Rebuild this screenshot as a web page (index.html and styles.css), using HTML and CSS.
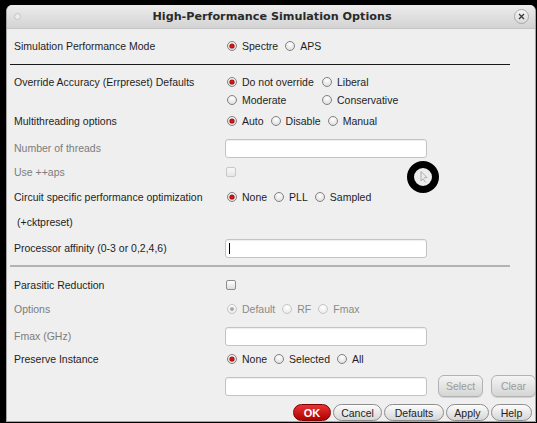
FILE: index.html
```html
<!DOCTYPE html>
<html>
<head>
<meta charset="utf-8">
<link rel="stylesheet" href="styles.css">
</head>
<body>
<div class="win">
  <div class="titlebar">
    <span class="dot"></span>
    <span class="title">High-Performance Simulation Options</span>
    <span class="close"><svg width="7" height="7" viewBox="0 0 7 7"><path d="M1 1L6 6M6 1L1 6" stroke="#3a3a3a" stroke-width="1.3"/></svg></span>
  </div>
  <div class="content">
    <div class="row">
      <span class="lbl">Simulation Performance Mode</span>
      <div class="ctl radios">
        <span class="opt"><span class="radio on"></span>Spectre</span>
        <span class="opt"><span class="radio"></span>APS</span>
      </div>
    </div>
    <div class="sep dark s1"></div>
    <div class="row tall m8">
      <span class="lbl top">Override Accuracy (Errpreset) Defaults</span>
      <div class="ctl grid2">
        <span class="opt"><span class="radio on"></span>Do not override</span>
        <span class="opt"><span class="radio"></span>Liberal</span>
        <span class="opt"><span class="radio"></span>Moderate</span>
        <span class="opt"><span class="radio"></span>Conservative</span>
      </div>
    </div>
    <div class="row m1">
      <span class="lbl">Multithreading options</span>
      <div class="ctl radios">
        <span class="opt"><span class="radio on"></span>Auto</span>
        <span class="opt"><span class="radio"></span>Disable</span>
        <span class="opt"><span class="radio"></span>Manual</span>
      </div>
    </div>
    <div class="row m5">
      <span class="lbl dim">Number of threads</span>
      <div class="ctl"><div class="field"></div></div>
    </div>
    <div class="row m2">
      <span class="lbl dim">Use ++aps</span>
      <div class="ctl"><span class="check off"></span></div>
    </div>
    <div class="row m3">
      <span class="lbl">Circuit specific performance optimization</span>
      <div class="ctl radios">
        <span class="opt"><span class="radio on"></span>None</span>
        <span class="opt"><span class="radio"></span>PLL</span>
        <span class="opt"><span class="radio"></span>Sampled</span>
      </div>
    </div>
    <div class="row m3">
      <span class="lbl indent">(+cktpreset)</span>
    </div>
    <div class="row m4">
      <span class="lbl">Processor affinity (0-3 or 0,2,4,6)</span>
      <div class="ctl"><div class="field"><span class="caret"></span></div></div>
    </div>
    <div class="sep grey s2"></div>
    <div class="row m7">
      <span class="lbl">Parasitic Reduction</span>
      <div class="ctl"><span class="check"></span></div>
    </div>
    <div class="row m2">
      <span class="lbl dim">Options</span>
      <div class="ctl radios disabled">
        <span class="opt"><span class="radio on"></span>Default</span>
        <span class="opt"><span class="radio"></span>RF</span>
        <span class="opt"><span class="radio"></span>Fmax</span>
      </div>
    </div>
    <div class="row m5">
      <span class="lbl dim">Fmax (GHz)</span>
      <div class="ctl"><div class="field"></div></div>
    </div>
    <div class="row m1">
      <span class="lbl">Preserve Instance</span>
      <div class="ctl radios">
        <span class="opt"><span class="radio on"></span>None</span>
        <span class="opt"><span class="radio"></span>Selected</span>
        <span class="opt"><span class="radio"></span>All</span>
      </div>
    </div>
    <div class="row m5">
      <span class="lbl"></span>
      <div class="ctl">
        <div class="field"></div>
        <span class="sbtn sel">Select</span>
        <span class="sbtn clr">Clear</span>
      </div>
    </div>
    <div class="btns">
      <span class="btn ok">OK</span>
      <span class="btn cancel">Cancel</span>
      <span class="btn defaults">Defaults</span>
      <span class="btn apply">Apply</span>
      <span class="btn help">Help</span>
    </div>
  </div>
</div>
<div class="busy">
  <svg width="34" height="34" viewBox="0 0 34 34">
    <circle cx="17" cy="17" r="12.5" fill="#ececec" stroke="#000" stroke-width="7"/>
    <path d="M15 11.5 L15 21 L17.2 18.8 L19.6 22.5 M15 11.5 L21 17.5 L18 17.8" fill="none" stroke="#a8a8a8" stroke-width="0.9"/>
  </svg>
</div>
</body>
</html>
```
FILE: styles.css
```css
html, body {
  margin: 0;
  padding: 0;
}
body {
  background: #000;
  width: 537px;
  height: 423px;
  overflow: hidden;
  position: relative;
  font-family: "Liberation Sans", Arial, sans-serif;
  font-size: 10.5px;
  color: #1e1e1e;
}
.win {
  margin: 5px 0 0 6px;
  width: 530px;
  height: 417px;
  box-sizing: border-box;
  background: #efefef;
  border: 1px solid #a4a4a4;
  border-top: none;
  border-radius: 6px 6px 0 0;
  overflow: hidden;
}
.titlebar {
  height: 24px;
  display: flex;
  align-items: center;
  background: linear-gradient(#ececec, #d3d3d3);
  border-bottom: 1px solid #c4c4c4;
  box-sizing: border-box;
}
.dot {
  width: 7px;
  height: 7px;
  margin-left: 7px;
  border-radius: 50%;
  box-sizing: border-box;
  border: 1px solid #c4c4c4;
  background: #ececec;
}
.title {
  flex: 1;
  text-align: center;
  font-family: "DejaVu Sans", sans-serif;
  font-weight: bold;
  font-size: 11.2px;
  color: #2a2a2a;
  padding-left: 9px;
}
.close {
  width: 15px;
  height: 15px;
  margin-right: 6px;
  border-radius: 50%;
  box-sizing: border-box;
  border: 1px solid #a9a9a9;
  background: linear-gradient(#f6f6f6, #dadada);
  display: flex;
  align-items: center;
  justify-content: center;
}
.content {
  padding: 6px 0 0 7px;
}
.row {
  display: grid;
  grid-template-columns: 211px 1fr;
  align-items: center;
  height: 22px;
}
.row.tall {
  height: 36px;
  align-items: start;
}
.lbl.top {
  line-height: 18px;
}
.lbl.dim {
  color: #7c7c7c;
}
.lbl.indent {
  padding-left: 3px;
}
.m1 { margin-top: 1px; }
.m2 { margin-top: 2px; }
.m3 { margin-top: 3px; }
.m4 { margin-top: 4px; }
.m5 { margin-top: 5px; }
.m7 { margin-top: 7px; }
.m8 { margin-top: 8px; }
.sep {
  margin-left: -4px;
  width: 500px;
}
.sep.dark {
  height: 1px;
  background: #1a1a1a;
}
.sep.grey {
  height: 2px;
  background: #b2b2b2;
}
.s1 { margin-top: 7px; }
.s2 { margin-top: 6px; }
.ctl {
  display: flex;
  align-items: center;
}
.ctl.radios {
  gap: 7px;
  padding-left: 2px;
}
.ctl.grid2 {
  display: grid;
  grid-template-columns: 95px auto;
  grid-auto-rows: 18px;
  align-items: center;
  padding-left: 2px;
}
.opt {
  display: flex;
  align-items: center;
  gap: 5px;
}
.radio {
  flex: none;
  width: 10px;
  height: 10px;
  box-sizing: border-box;
  border-radius: 50%;
  border: 1px solid #828282;
  background: radial-gradient(circle at 50% 30%, #ffffff, #d8d8d8);
  position: relative;
}
.radio.on::after {
  content: "";
  position: absolute;
  left: 2px;
  top: 2px;
  width: 4px;
  height: 4px;
  border-radius: 50%;
  background: #d41414;
  box-shadow: 0 0 0 0.6px #8c1010;
}
.disabled .opt {
  color: #8a8a8a;
}
.disabled .radio {
  border-color: #c6c6c6;
  background: radial-gradient(circle at 50% 30%, #ffffff, #e6e6e6);
}
.disabled .radio.on::after {
  background: #a9a9a9;
  box-shadow: none;
}
.check {
  width: 10px;
  height: 10px;
  margin-left: 1px;
  box-sizing: border-box;
  border: 1px solid #8c8c8c;
  border-radius: 2px;
  background: linear-gradient(#ffffff, #dedede);
}
.check.off {
  border-color: #c8c8c8;
  background: linear-gradient(#f8f8f8, #e6e6e6);
}
.field {
  width: 202px;
  height: 19px;
  box-sizing: border-box;
  border: 1px solid #c3c3c3;
  border-radius: 3px;
  background: #fff;
  box-shadow: inset 0 1px 1px rgba(0, 0, 0, 0.07);
  display: flex;
  align-items: center;
}
.caret {
  width: 1px;
  height: 11px;
  margin-left: 3px;
  background: #000;
}
.sbtn {
  height: 22px;
  box-sizing: border-box;
  border: 1px solid #b2b2b2;
  border-radius: 6px;
  background: linear-gradient(#f4f4f4, #d5d5d5);
  box-shadow: 0 1px 0 rgba(0, 0, 0, 0.12);
  color: #9b9b9b;
  display: flex;
  align-items: center;
  justify-content: center;
  flex: none;
}
.sel { width: 45px; margin-left: 11px; }
.clr { width: 45px; margin-left: 8px; }
.btns {
  margin-top: 7px;
  display: flex;
  justify-content: flex-end;
  gap: 2px;
  padding-right: 3px;
  height: 17px;
}
.btn {
  height: 17px;
  box-sizing: border-box;
  border: 1px solid #8d8d8d;
  border-radius: 9px;
  background: linear-gradient(#fcfcfc, #d6d6d6);
  color: #222;
  display: flex;
  align-items: center;
  justify-content: center;
}
.btn.ok {
  width: 38px;
  background: linear-gradient(#e83434, #b00000);
  border-color: #7c0000;
  color: #fff;
  font-weight: bold;
  font-size: 11px;
}
.btn.cancel { width: 49px; }
.btn.defaults { width: 60px; }
.btn.apply { width: 43px; }
.btn.help { width: 41px; }
.busy {
  position: absolute;
  left: 406px;
  top: 160px;
  width: 34px;
  height: 34px;
}
```
